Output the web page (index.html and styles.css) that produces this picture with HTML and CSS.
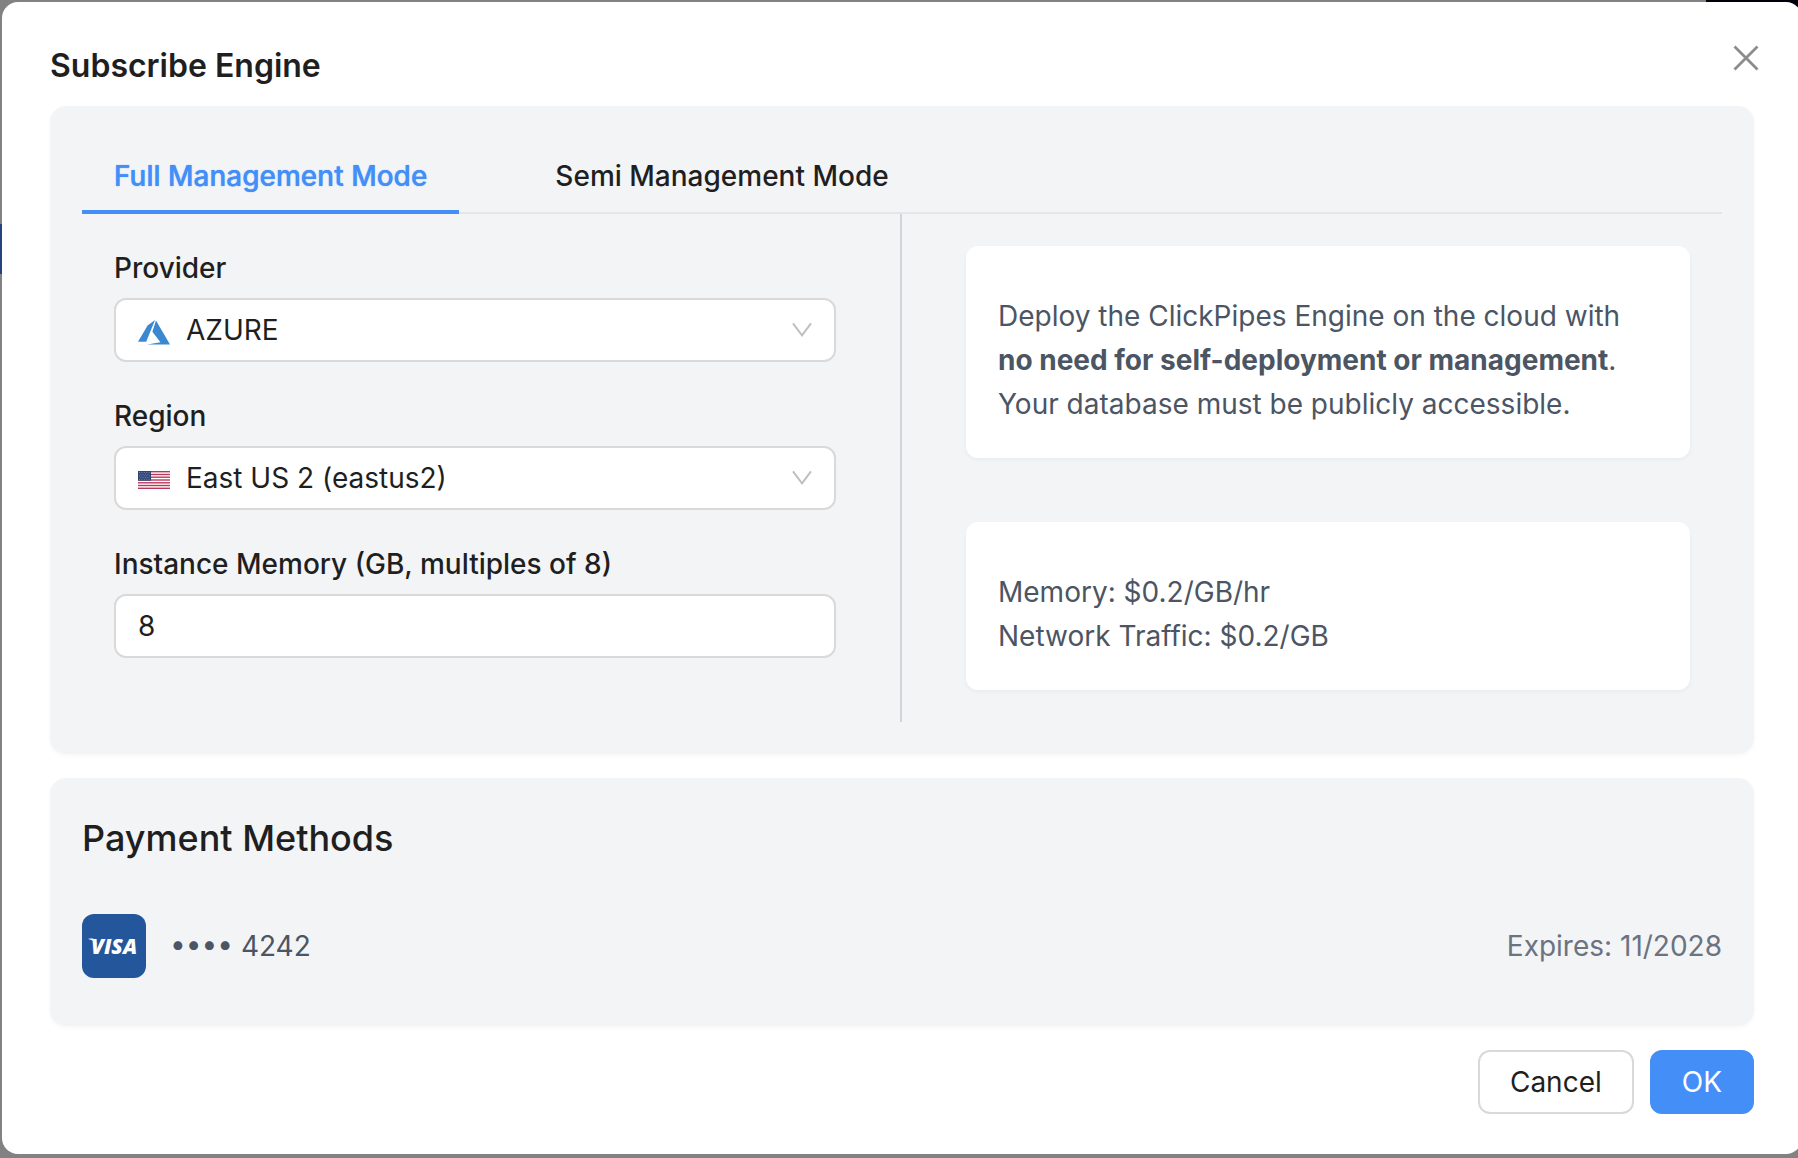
FILE: index.html
```html
<!doctype html>
<html lang="en">
  <head>
    <meta charset="UTF-8" />
    <meta name="viewport" content="width=device-width, initial-scale=1.0" />
    <title>Subscribe Engine</title>
    <link rel="stylesheet" href="styles.css">
  </head>
  <body>
    <!-- dimmed page behind the dialog -->
    <div class="backdrop" aria-hidden="true">
      <div class="backdrop-header"></div>
      <div class="backdrop-button"></div>
    </div>

    <div class="modal" role="dialog" aria-labelledby="modal-title">
      <button class="modal-close" type="button" aria-label="Close">
        <svg width="26" height="26" viewBox="0 0 26 26" fill="none" stroke="currentColor" stroke-width="2.8">
          <path d="M1.5 1.5L24.5 24.5M24.5 1.5L1.5 24.5" />
        </svg>
      </button>

      <h1 class="modal-title" id="modal-title">Subscribe Engine</h1>

      <section class="panel">
        <div class="tabs" role="tablist">
          <button class="tab tab-active" type="button" role="tab" aria-selected="true">Full Management Mode</button>
          <button class="tab" type="button" role="tab" aria-selected="false">Semi Management Mode</button>
        </div>

        <div class="panel-columns">
          <form class="engine-form">
            <div class="field">
              <label for="provider">Provider</label>
              <div class="control">
                <svg class="control-icon" width="32" height="32" viewBox="0 0 32 32" fill="#3b88d2">
                  <path d="M17 6L9.6 11.6L0 27.8H8.2Z" />
                  <path d="M18 6.6L14.4 17.8L22.4 28.2L9.2 30.4H32Z" />
                </svg>
                <select id="provider">
                  <option>AZURE</option>
                </select>
                <svg class="chevron" width="20" height="16" viewBox="0 0 20 16" fill="none" stroke="currentColor" stroke-width="2">
                  <path d="M1 1.4L10 13.4L19 1.4" />
                </svg>
              </div>
            </div>

            <div class="field">
              <label for="region">Region</label>
              <div class="control">
                <svg class="control-icon" width="32" height="32" viewBox="0 0 32 32">
                  <rect y="9" width="32" height="18" fill="#fff" />
                  <g fill="#b2224a" fill-opacity="0.9">
                    <rect y="9" width="32" height="1.4" />
                    <rect y="11.8" width="32" height="1.4" />
                    <rect y="14.5" width="32" height="1.4" />
                    <rect y="17.3" width="32" height="1.4" />
                    <rect y="20.1" width="32" height="1.4" />
                    <rect y="22.8" width="32" height="1.4" />
                    <rect y="25.6" width="32" height="1.4" />
                  </g>
                  <rect y="9" width="13" height="9.7" fill="#2f4576" />
                  <g stroke="#8d9bbb" stroke-width="0.8" stroke-dasharray="1 1.4">
                    <path d="M1 10.5H12M2.2 12.2H12M1 13.9H12M2.2 15.6H12M1 17.3H12" />
                  </g>
                </svg>
                <select id="region">
                  <option>East US 2 (eastus2)</option>
                </select>
                <svg class="chevron" width="20" height="16" viewBox="0 0 20 16" fill="none" stroke="currentColor" stroke-width="2">
                  <path d="M1 1.4L10 13.4L19 1.4" />
                </svg>
              </div>
            </div>

            <div class="field">
              <label for="memory">Instance Memory (GB, multiples of 8)</label>
              <div class="control">
                <input id="memory" type="text" inputmode="numeric" value="8" />
              </div>
            </div>
          </form>

          <div class="info">
            <p class="info-card">
              Deploy the ClickPipes Engine on the cloud with
              <strong>no need for self-deployment or management</strong>.
              Your database must be publicly accessible.
            </p>
            <p class="info-card">
              Memory: $0.2/GB/hr<br />
              Network Traffic: $0.2/GB
            </p>
          </div>
        </div>
      </section>

      <section class="panel">
        <h2 class="panel-title">Payment Methods</h2>
        <div class="payment">
          <svg class="card-brand" width="64" height="64" viewBox="0 0 64 64" role="img" aria-label="Visa">
            <rect width="64" height="64" rx="12" fill="#23569b" />
            <path d="M6 25C9 24.2 12.5 24.4 13.6 26.4L15 31C13 27.6 10 25.8 6 25Z" fill="#fff" />
            <text class="card-brand-name" x="9" y="40">VISA</text>
          </svg>
          <span class="card-number">•••• 4242</span>
          <span class="card-expiry">Expires: 11/2028</span>
        </div>
      </section>

      <div class="modal-footer">
        <button class="btn" type="button">Cancel</button>
        <button class="btn btn-primary" type="button">OK</button>
      </div>
    </div>
  </body>
</html>
```
FILE: styles.css
```css
* {
  box-sizing: border-box;
}

body {
  margin: 0;
  padding: 2px;
  min-height: 100vh;
  overflow: hidden;
  background: #828282;
  color: #1f1f1f;
  font-family: Inter, "Liberation Sans", sans-serif;
  font-size: 28px;
  line-height: 44px;
}

button,
input,
select {
  font: inherit;
  color: inherit;
}

.backdrop {
  position: absolute;
  inset: 0;
  overflow: hidden;
}

.backdrop-header {
  position: absolute;
  top: 0;
  right: 0;
  width: 92px;
  height: 24px;
  background: #00000c;
}

.backdrop-button {
  position: absolute;
  top: 224px;
  left: 0;
  width: 24px;
  height: 50px;
  background: #27427c;
}

/* runs slightly past the right edge of the window */
.modal {
  position: relative;
  margin-right: -6px;
  padding: 40px 48px;
  border-radius: 16px;
  background: #fff;
}

.modal-title {
  margin: 0 0 16px;
  font-size: 32px;
  font-weight: 600;
  line-height: 48px;
}

.modal-close {
  position: absolute;
  top: 24px;
  right: 24px;
  display: flex;
  align-items: center;
  justify-content: center;
  width: 64px;
  height: 64px;
  padding: 0;
  border: 0;
  background: none;
  color: #8c8c8c;
  cursor: pointer;
}

.panel {
  margin-bottom: 24px;
  padding: 32px;
  border-radius: 16px;
  background: #f3f4f6;
  box-shadow: 0 2px 4px rgba(0, 0, 0, 0.03);
}

.tabs {
  display: flex;
  gap: 64px;
  box-shadow: inset 0 -2px #e5e6e8;
}

.tab {
  padding: 16px 32px 12px;
  border: 0;
  border-bottom: 4px solid transparent;
  background: none;
  font-weight: 500;
  cursor: pointer;
}

.tab-active {
  border-bottom-color: #448ef7;
  color: #448ef7;
  text-shadow: 0 0 1px currentColor;
}

.panel-columns {
  display: grid;
  grid-template-columns: 1fr 1fr;
}

.engine-form {
  padding: 32px 64px 64px 32px;
  border-right: 2px solid #d1d5db;
}

.field + .field {
  margin-top: 32px;
}

.field label {
  display: block;
  margin-bottom: 8px;
  font-weight: 500;
}

.control {
  display: flex;
  align-items: center;
  height: 64px;
  padding: 0 22px;
  border: 2px solid #d9d9d9;
  border-radius: 12px;
  background: #fff;
}

.control select,
.control input {
  flex: 1;
  min-width: 0;
  padding: 0;
  border: 0;
  outline: 0;
  background: none;
  appearance: none;
}

.control-icon {
  margin-right: 16px;
}

.chevron {
  color: #bfbfbf;
}

.info {
  display: flex;
  flex-direction: column;
  gap: 64px;
  padding: 32px 32px 32px 64px;
}

.info-card {
  margin: 0;
  padding: 48px 32px 32px;
  border-radius: 12px;
  background: #fff;
  box-shadow: 0 2px 4px rgba(0, 0, 0, 0.04);
  color: #4b5563;
}

.panel-title {
  margin: 0 0 48px;
  font-size: 36px;
  font-weight: 500;
  line-height: 56px;
}

.payment {
  display: flex;
  align-items: center;
  gap: 24px;
  margin-bottom: 16px;
}

.card-brand-name {
  fill: #fff;
  font-family: "Open Sans", sans-serif;
  font-size: 21px;
  font-style: italic;
  font-weight: 800;
}

.card-number {
  color: #4b5563;
}

.card-expiry {
  margin-left: auto;
  color: #6b7280;
}

.modal-footer {
  display: flex;
  justify-content: flex-end;
  gap: 16px;
}

.btn {
  height: 64px;
  padding: 0 30px;
  border: 2px solid #d9d9d9;
  border-radius: 12px;
  background: #fff;
  cursor: pointer;
}

.btn-primary {
  border-color: #448ef7;
  background: #448ef7;
  color: #fff;
}
```
